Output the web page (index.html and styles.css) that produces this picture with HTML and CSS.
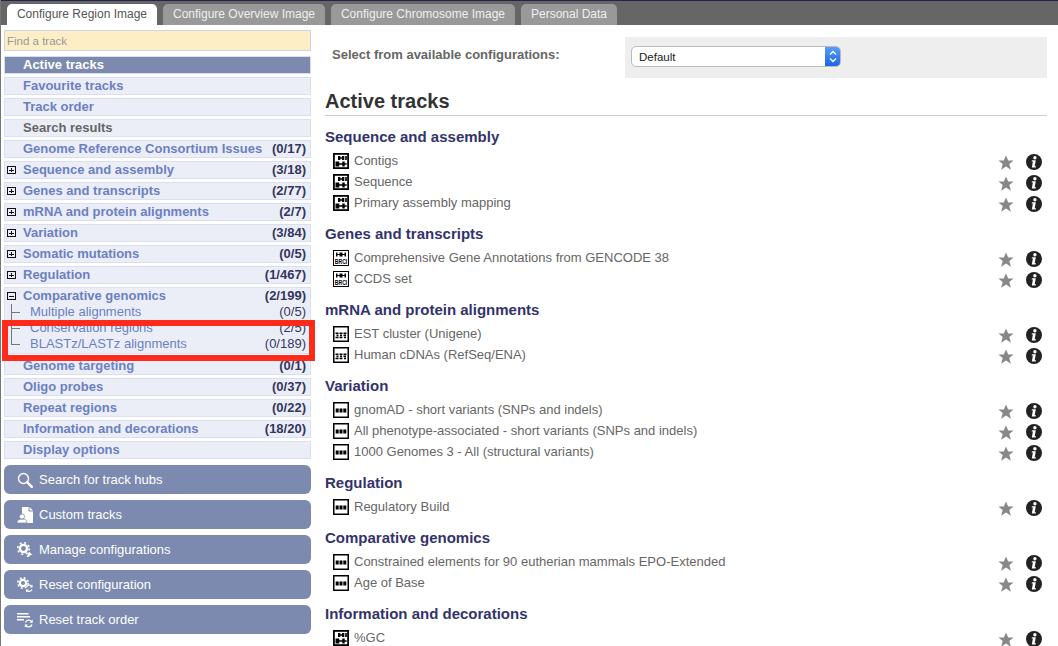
FILE: index.html
```html
<!DOCTYPE html>
<html lang="en">
<head>
  <meta charset="UTF-8" />
  <title>Configure Region Image</title>
  <link rel="stylesheet" href="styles.css">
</head>
<body>

<svg class="defs" width="0" height="0">
  <symbol id="i-contig" viewBox="0 0 16 16">
    <rect x="0.9" y="0.9" width="14.2" height="14.2" fill="#fff" stroke="#000" stroke-width="1.8"/>
    <path d="M5 3h2.300v4H5zM9 3h2.300v4H9zM7 4.200h2v1.600H7zM12.200 3h1.600v4h-1.600zM2.500 8.500h3.800v5H2.500zM6 10.200h3.500v1.600H6zM9.300 8.500h2.400v5H9.300zM11.500 10.200h2.200v1.600h-2.200z" fill="#000"/>
  </symbol>
  <symbol id="i-gene" viewBox="0 0 16 16">
    <rect x="0.5" y="0.5" width="15" height="15" fill="#fff" stroke="#000"/>
    <path d="M3 2.500h1.500v4H3zM6.500 2.500h3v4h-3zM11.500 2.500H13v4h-1.500zM4.500 4h2v1h-2zM9.500 4h2v1h-2z" fill="#000"/>
  </symbol>
  <symbol id="i-est" viewBox="0 0 16 16">
    <rect x="0.75" y="0.75" width="14.5" height="14.5" fill="#fff" stroke="#000" stroke-width="1.5"/>
    <path d="M2.500 6.500h3v1.600h-3zM3.500 8.600h2v1.600h-2zM2.500 10.700h3v1.600h-3zM6.500 6.500h3v1.600h-3zM7 8.600h2v1.600H7zM6.500 10.700h3v1.600h-3zM10.500 6.500h3v1.600h-3zM10.500 8.600h2.500v1.600h-2.500zM11 10.700h2v1.600h-2z" fill="#000"/>
  </symbol>
  <symbol id="i-var" viewBox="0 0 16 16">
    <rect x="0.75" y="0.75" width="14.5" height="14.5" fill="#fff" stroke="#000" stroke-width="1.5"/>
    <path d="M2.700 6.500h3v4h-3zM6.500 6.500h3v4h-3zM10.300 6.500h3v4h-3z" fill="#000"/>
  </symbol>
  <symbol id="i-star" viewBox="0 0 16 16">
    <path d="M8 .6l2.200 5h5.400l-4.300 3.500 1.600 5.600L8 11.500l-4.900 3.200 1.600-5.600L.4 5.600h5.400z" fill="#888"/>
  </symbol>
  <symbol id="i-info" viewBox="0 0 16 16">
    <circle cx="8" cy="8" r="8" fill="#222"/>
    <circle cx="8.900" cy="3.700" r="1.700" fill="#fff"/>
    <path d="M5.900 6.300h3.900l-1.100 6h1.300l-.3 1.300H5.800l1.100-6H5.700z" fill="#fff"/>
  </symbol>
  <symbol id="i-search" viewBox="0 0 16 16">
    <circle cx="6.500" cy="6.500" r="5" fill="none" stroke="#fff" stroke-width="1.400"/>
    <path d="M10.200 10.200l4.600 4.600" stroke="#fff" stroke-width="2.400" stroke-linecap="round"/>
  </symbol>
  <symbol id="i-custom" viewBox="0 0 16 16">
    <path d="M5 0h6.500v4.500H16V16H5z" fill="#fff"/>
    <path d="M12.500 0L16 3.500h-3.500z" fill="#fff"/>
    <circle cx="5" cy="9.500" r="2.600" fill="#fff" stroke="#7b8aae" stroke-width=".8"/>
    <path d="M0 16c0-2.600 1.200-3.800 5-3.800s5 1.200 5 3.800z" fill="#fff" stroke="#7b8aae" stroke-width=".8"/>
  </symbol>
  <symbol id="i-gear" viewBox="0 0 16 16">
    <circle cx="6.500" cy="6.500" r="3.600" fill="none" stroke="#fff" stroke-width="2.400"/>
    <circle cx="6.500" cy="6.500" r="5.800" fill="none" stroke="#fff" stroke-width="1.600" stroke-dasharray="2 2.550"/>
    <path d="M9.500 15l1.800-3.200H9.500l3-1.800 3 3h-1.800L11.500 15z" fill="#fff"/>
  </symbol>
  <symbol id="i-reset" viewBox="0 0 16 16">
    <circle cx="6" cy="6" r="3.200" fill="none" stroke="#fff" stroke-width="2.200"/>
    <circle cx="6" cy="6" r="5.200" fill="none" stroke="#fff" stroke-width="1.500" stroke-dasharray="2 2.100"/>
    <path d="M9.500 10a3.200 3.200 0 0 1 5.500-.5M15 12.500a3.200 3.200 0 0 1-5.500.6" fill="none" stroke="#fff" stroke-width="1.200"/>
    <path d="M15.500 7.500v3h-3zM9 15.500v-3h3z" fill="#fff"/>
  </symbol>
  <symbol id="i-order" viewBox="0 0 16 16">
    <path d="M0 1h11.500v1.500H0zM0 4h13v1.500H0zM0 7h7v1.500H0z" fill="#fff"/>
    <path d="M8.500 10.500a3.300 3.300 0 0 1 6-.8M15 12.500a3.300 3.300 0 0 1-6 .8" fill="none" stroke="#fff" stroke-width="1.300"/>
    <path d="M15.700 7.600v3.200h-3.200zM7.800 15.600v-3.200H11z" fill="#fff"/>
  </symbol>
</svg>

<div class="tabbar">
  <a class="tab tab-active">Configure Region Image</a>
  <a class="tab tab-overview">Configure Overview Image</a>
  <a class="tab tab-chromosome">Configure Chromosome Image</a>
  <a class="tab tab-personal">Personal Data</a>
</div>

<div class="shell">
  <div class="sidebar">
    <input class="find" type="text" placeholder="Find a track">

    <ul class="nav">
      <li class="nav-row active"><span class="name">Active tracks</span></li>
      <li class="nav-row"><span class="name">Favourite tracks</span></li>
      <li class="nav-row"><span class="name">Track order</span></li>
      <li class="nav-row muted"><span class="name">Search results</span></li>
      <li class="nav-row"><span class="name">Genome Reference Consortium Issues</span><span class="count">(0/17)</span></li>
      <li class="nav-row"><i class="toggle"></i><span class="name">Sequence and assembly</span><span class="count">(3/18)</span></li>
      <li class="nav-row"><i class="toggle"></i><span class="name">Genes and transcripts</span><span class="count">(2/77)</span></li>
      <li class="nav-row"><i class="toggle"></i><span class="name">mRNA and protein alignments</span><span class="count">(2/7)</span></li>
      <li class="nav-row"><i class="toggle"></i><span class="name">Variation</span><span class="count">(3/84)</span></li>
      <li class="nav-row"><i class="toggle"></i><span class="name">Somatic mutations</span><span class="count">(0/5)</span></li>
      <li class="nav-row"><i class="toggle"></i><span class="name">Regulation</span><span class="count">(1/467)</span></li>
      <li class="nav-group">
        <div class="group-head"><i class="toggle open"></i><span class="name">Comparative genomics</span><span class="count">(2/199)</span></div>
        <div class="sub-row"><span>Multiple alignments</span><span>(0/5)</span></div>
        <div class="sub-row"><span>Conservation regions</span><span>(2/5)</span></div>
        <div class="sub-row"><span>BLASTz/LASTz alignments</span><span>(0/189)</span></div>
      </li>
      <li class="nav-row"><span class="name">Genome targeting</span><span class="count">(0/1)</span></li>
      <li class="nav-row"><span class="name">Oligo probes</span><span class="count">(0/37)</span></li>
      <li class="nav-row"><span class="name">Repeat regions</span><span class="count">(0/22)</span></li>
      <li class="nav-row"><span class="name">Information and decorations</span><span class="count">(18/20)</span></li>
      <li class="nav-row"><span class="name">Display options</span></li>
    </ul>

    <div class="actions">
      <a class="action"><svg><use href="#i-search"/></svg>Search for track hubs</a>
      <a class="action"><svg><use href="#i-custom"/></svg>Custom tracks</a>
      <a class="action"><svg><use href="#i-gear"/></svg>Manage configurations</a>
      <a class="action"><svg><use href="#i-reset"/></svg>Reset configuration</a>
      <a class="action"><svg><use href="#i-order"/></svg>Reset track order</a>
    </div>
  </div>

  <div class="main">
    <div class="config-row">
      <label class="config-label">Select from available configurations:</label>
      <div class="config-box">
        <div class="select">
          <span class="select-value">Default</span>
          <span class="select-arrows">
            <svg width="16" height="21" viewBox="0 0 16 21"><path d="M5 8.500l3-3 3 3M5 12.500l3 3 3-3" fill="none" stroke="#fff" stroke-width="1.300"/></svg>
          </span>
        </div>
      </div>
    </div>

    <h2>Active tracks</h2>

    <div class="section">
      <h3>Sequence and assembly</h3>
      <div class="track"><svg class="glyph"><use href="#i-contig"/></svg><span class="track-name">Contigs</span><svg class="star"><use href="#i-star"/></svg><svg class="info"><use href="#i-info"/></svg></div>
      <div class="track"><svg class="glyph"><use href="#i-contig"/></svg><span class="track-name">Sequence</span><svg class="star"><use href="#i-star"/></svg><svg class="info"><use href="#i-info"/></svg></div>
      <div class="track"><svg class="glyph"><use href="#i-contig"/></svg><span class="track-name">Primary assembly mapping</span><svg class="star"><use href="#i-star"/></svg><svg class="info"><use href="#i-info"/></svg></div>
    </div>

    <div class="section">
      <h3>Genes and transcripts</h3>
      <div class="track"><svg class="glyph" viewBox="0 0 16 16"><use href="#i-gene"/><text class="brci" x="8" y="13.900" textLength="12.500" lengthAdjust="spacingAndGlyphs">BRCI</text></svg><span class="track-name">Comprehensive Gene Annotations from GENCODE 38</span><svg class="star"><use href="#i-star"/></svg><svg class="info"><use href="#i-info"/></svg></div>
      <div class="track"><svg class="glyph" viewBox="0 0 16 16"><use href="#i-gene"/><text class="brci" x="8" y="13.900" textLength="12.500" lengthAdjust="spacingAndGlyphs">BRCI</text></svg><span class="track-name">CCDS set</span><svg class="star"><use href="#i-star"/></svg><svg class="info"><use href="#i-info"/></svg></div>
    </div>

    <div class="section">
      <h3>mRNA and protein alignments</h3>
      <div class="track"><svg class="glyph"><use href="#i-est"/></svg><span class="track-name">EST cluster (Unigene)</span><svg class="star"><use href="#i-star"/></svg><svg class="info"><use href="#i-info"/></svg></div>
      <div class="track"><svg class="glyph"><use href="#i-est"/></svg><span class="track-name">Human cDNAs (RefSeq/ENA)</span><svg class="star"><use href="#i-star"/></svg><svg class="info"><use href="#i-info"/></svg></div>
    </div>

    <div class="section">
      <h3>Variation</h3>
      <div class="track"><svg class="glyph"><use href="#i-var"/></svg><span class="track-name">gnomAD - short variants (SNPs and indels)</span><svg class="star"><use href="#i-star"/></svg><svg class="info"><use href="#i-info"/></svg></div>
      <div class="track"><svg class="glyph"><use href="#i-var"/></svg><span class="track-name">All phenotype-associated - short variants (SNPs and indels)</span><svg class="star"><use href="#i-star"/></svg><svg class="info"><use href="#i-info"/></svg></div>
      <div class="track"><svg class="glyph"><use href="#i-var"/></svg><span class="track-name">1000 Genomes 3 - All (structural variants)</span><svg class="star"><use href="#i-star"/></svg><svg class="info"><use href="#i-info"/></svg></div>
    </div>

    <div class="section">
      <h3>Regulation</h3>
      <div class="track"><svg class="glyph"><use href="#i-var"/></svg><span class="track-name">Regulatory Build</span><svg class="star"><use href="#i-star"/></svg><svg class="info"><use href="#i-info"/></svg></div>
    </div>

    <div class="section">
      <h3>Comparative genomics</h3>
      <div class="track"><svg class="glyph"><use href="#i-var"/></svg><span class="track-name">Constrained elements for 90 eutherian mammals EPO-Extended</span><svg class="star"><use href="#i-star"/></svg><svg class="info"><use href="#i-info"/></svg></div>
      <div class="track"><svg class="glyph"><use href="#i-var"/></svg><span class="track-name">Age of Base</span><svg class="star"><use href="#i-star"/></svg><svg class="info"><use href="#i-info"/></svg></div>
    </div>

    <div class="section">
      <h3>Information and decorations</h3>
      <div class="track"><svg class="glyph"><use href="#i-contig"/></svg><span class="track-name">%GC</span><svg class="star"><use href="#i-star"/></svg><svg class="info"><use href="#i-info"/></svg></div>
    </div>
  </div>
</div>

<!-- annotation over the sidebar -->
<div class="callout"></div>

</body>
</html>
```
FILE: styles.css
```css
html, body {
  height: 646px;
  overflow: hidden;
}
body {
  margin: 0;
  font-family: "Liberation Sans", Arial, sans-serif;
  font-size: 13px;
  color: #666;
  background: white;
  border-left: 1px solid #777;
  position: relative;
}
.defs {
  position: absolute;
}

/* tabs */
.tabbar {
  display: flex;
  align-items: flex-end;
  height: 24px;
  padding-left: 6px;
  background: #666;
  border-top: 1px solid #22224a;
}
.tab {
  height: 21px;
  line-height: 21px;
  margin-right: 6px;
  font-size: 12px;
  text-align: center;
  color: #eee;
  background: #999;
  border-radius: 5px 5px 0 0;
}
.tab-active {
  width: 150px;
  color: #555;
  background: white;
}
.tab-overview { width: 162px; }
.tab-chromosome { width: 184px; }
.tab-personal { width: 96px; }

.shell {
  display: flex;
  align-items: flex-start;
}

/* left column */
.sidebar {
  flex: none;
  width: 307px;
  padding: 5px 0 0 3px;
}
.find {
  display: block;
  box-sizing: border-box;
  width: 100%;
  height: 21px;
  margin: 0 0 5px;
  padding: 0 2px;
  font-family: inherit;
  font-size: 11.5px;
  background: #fdeec6;
  border: 1px solid #cfd5e2;
  outline: none;
}
.find::placeholder {
  color: #999;
}
.nav {
  list-style: none;
  margin: 0;
  padding: 0;
}
.nav-row, .nav-group {
  margin-bottom: 3px;
  background: #ebeef7;
  border: 1px solid #d9dfef;
  box-sizing: border-box;
}
.nav-row {
  display: flex;
  align-items: center;
  height: 18px;
  padding: 0 4px 2px 18px;
  position: relative;
}
.name {
  flex: 1;
  font-weight: bold;
  color: #6b7fc4;
}
.count {
  font-weight: bold;
  color: #33365f;
}
.nav-row.active {
  background: #7b8aae;
}
.nav-row.active .name {
  color: white;
}
.nav-row.muted .name {
  color: #666;
}
.toggle {
  position: absolute;
  left: 2px;
  top: 4px;
  box-sizing: border-box;
  width: 9px;
  height: 8px;
  border: 1px solid #111;
  background: linear-gradient(#111, #111) center / 5px 1px no-repeat,
              linear-gradient(#111, #111) center / 1px 4px no-repeat;
}
.toggle.open {
  background: linear-gradient(#111, #111) center / 5px 1px no-repeat;
}
.nav-group {
  height: 67px;
}
.group-head {
  display: flex;
  align-items: center;
  box-sizing: border-box;
  height: 16px;
  padding: 0 4px 2px 18px;
  position: relative;
}
.sub-row {
  display: flex;
  justify-content: space-between;
  height: 16px;
  line-height: 16px;
  padding: 0 4px 0 25px;
  color: #6b7fc4;
  position: relative;
}
.sub-row span:last-child {
  color: #33365f;
}
.sub-row::before {
  content: "";
  position: absolute;
  left: 6px;
  top: -8px;
  width: 8px;
  height: 16px;
  border-left: 1px solid #777;
  border-bottom: 1px solid #777;
}
.group-head + .sub-row::before {
  top: 0;
  height: 8px;
}
.actions {
  margin-top: 6px;
}
.action {
  display: flex;
  align-items: center;
  height: 29px;
  margin-bottom: 6px;
  padding-left: 13px;
  color: white;
  background: #7b8aae;
  border-radius: 6px;
}
.action svg {
  width: 16px;
  height: 16px;
  margin-right: 6px;
}

/* main column */
.main {
  flex: 1;
  margin-left: 14px;
  padding-right: 11px;
  padding-top: 12px;
}
.config-row {
  display: flex;
  height: 41px;
}
.config-label {
  width: 293px;
  padding: 10px 0 0 7px;
  font-weight: bold;
}
.config-box {
  flex: 1;
  padding: 9px 6px;
  background: #eee;
}
.select {
  display: flex;
  box-sizing: border-box;
  width: 210px;
  height: 21px;
  background: white;
  border: 1px solid #bbb;
  border-radius: 5px;
  overflow: hidden;
}
.select-value {
  flex: 1;
  padding-left: 7px;
  font-size: 11.5px;
  line-height: 20px;
  color: #222;
}
.select-arrows {
  width: 16px;
  margin: -1px;
  background: linear-gradient(#5aa0f8, #1a62e8);
}
.select-arrows svg {
  display: block;
}
h2 {
  margin: 11px 0 0;
  height: 26px;
  line-height: 24px;
  font-size: 20px;
  color: #333;
  border-bottom: 1px solid #ccc;
}
.section {
  margin-top: 11px;
}
h3 {
  margin: 0 0 3px;
  height: 20px;
  line-height: 20px;
  font-size: 15px;
  color: #33336b;
}
.track {
  display: flex;
  align-items: center;
  height: 21px;
  padding: 0 5px 0 8px;
}
.glyph {
  flex: none;
  width: 16px;
  height: 16px;
  margin-right: 5px;
  overflow: visible;
}
.brci {
  font-size: 7px;
  font-weight: bold;
  text-anchor: middle;
  fill: #000;
}
.track-name {
  flex: 1;
}
.star {
  flex: none;
  width: 16px;
  height: 16px;
  margin: 4px 12px 0 0;
}
.info {
  flex: none;
  width: 16px;
  height: 16px;
  margin-top: 2px;
}

/* red annotation box */
.callout {
  position: absolute;
  left: 1px;
  top: 320px;
  width: 301px;
  height: 29px;
  border: 6px solid #ff2a1a;
}
```
